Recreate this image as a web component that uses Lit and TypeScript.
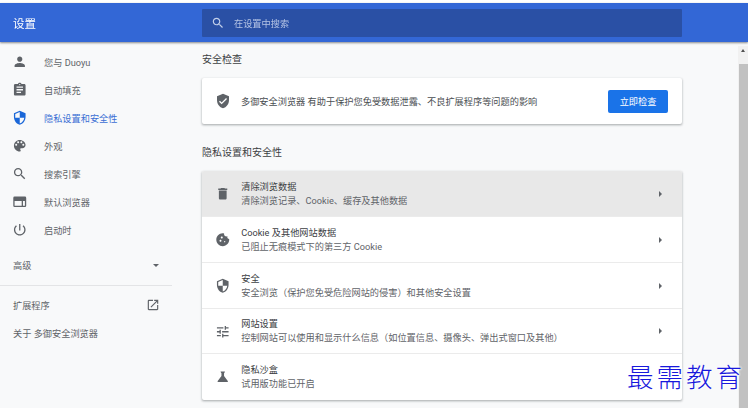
import { LitElement, html, css } from "lit";
import { customElement } from "lit/decorators.js";

const P: Record<string, string> = {
  person: "M12 12c2.21 0 4-1.79 4-4s-1.79-4-4-4-4 1.79-4 4 1.79 4 4 4zm0 2c-2.67 0-8 1.34-8 4v2h16v-2c0-2.66-5.33-4-8-4z",
  assignment: "M19 3h-4.18C14.4 1.84 13.3 1 12 1c-1.3 0-2.4.84-2.82 2H5c-1.1 0-2 .9-2 2v14c0 1.1.9 2 2 2h14c1.1 0 2-.9 2-2V5c0-1.1-.9-2-2-2zm-7 0c.55 0 1 .45 1 1s-.45 1-1 1-1-.45-1-1 .45-1 1-1zm2 14H7v-2h7v2zm3-4H7v-2h10v2zm0-4H7V7h10v2z",
  security: "M12 1L3 5v6c0 5.55 3.84 10.74 9 12 5.16-1.26 9-6.45 9-12V5l-9-4zm0 10.99h7c-.53 4.12-3.28 7.79-7 8.94V12H5V6.3l7-3.11v8.8z",
  palette: "M12 3c-4.97 0-9 4.03-9 9s4.03 9 9 9c.83 0 1.5-.67 1.5-1.5 0-.39-.15-.74-.39-1.01-.23-.26-.38-.61-.38-.99 0-.83.67-1.5 1.5-1.5H16c2.76 0 5-2.24 5-5 0-4.42-4.03-8-9-8zm-5.5 9c-.83 0-1.5-.67-1.5-1.5S5.67 9 6.5 9 8 9.67 8 10.5 7.33 12 6.5 12zm3-4C8.67 8 8 7.33 8 6.5S8.67 5 9.5 5s1.5.67 1.5 1.5S10.33 8 9.5 8zm5 0c-.83 0-1.5-.67-1.5-1.5S13.67 5 14.5 5s1.5.67 1.5 1.5S15.33 8 14.5 8zm3 4c-.83 0-1.5-.67-1.5-1.5S16.67 9 17.5 9s1.5.67 1.5 1.5-.67 1.5-1.5 1.5z",
  search: "M15.5 14h-.79l-.28-.27C15.41 12.59 16 11.11 16 9.5 16 5.91 13.09 3 9.5 3S3 5.91 3 9.5 5.91 16 9.5 16c1.61 0 3.09-.59 4.23-1.57l.27.28v.79l5 4.99L20.49 19l-4.99-5zm-6 0C7.01 14 5 11.99 5 9.5S7.01 5 9.5 5 14 7.01 14 9.5 11.99 14 9.5 14z",
  web: "M20 4H4a2 2 0 0 0-2 2v12a2 2 0 0 0 2 2h16a2 2 0 0 0 2-2V6a2 2 0 0 0-2-2zM4 18v-7h11v7H4zm16 0h-3v-7h3v7z",
  power: "M13 3h-2v10h2V3zm4.83 2.17l-1.42 1.42C17.99 7.86 19 9.81 19 12c0 3.87-3.13 7-7 7s-7-3.13-7-7c0-2.19 1.01-4.14 2.58-5.42L6.17 5.17C4.23 6.82 3 9.26 3 12c0 4.97 4.03 9 9 9s9-4.03 9-9c0-2.74-1.23-5.18-3.17-6.83z",
  open: "M19 19H5V5h7V3H5c-1.11 0-2 .9-2 2v14c0 1.1.89 2 2 2h14c1.1 0 2-.9 2-2v-7h-2v7zM14 3v2h3.59l-9.83 9.83 1.41 1.41L19 6.41V10h2V3h-7z",
  check: "M12 1L3 5v6c0 5.55 3.84 10.74 9 12 5.16-1.26 9-6.45 9-12V5l-9-4zm-2 16l-4-4 1.41-1.41L10 14.17l6.59-6.59L18 9l-8 8z",
  trash: "M6 19c0 1.1.9 2 2 2h8c1.1 0 2-.9 2-2V7H6v12zM19 4h-3.5l-1-1h-5l-1 1H5v2h14V4z",
  cookie: "M21.95 10.99c-1.79-.03-3.7-1.95-2.68-4.22-2.97 1-5.78-1.59-5.19-4.56C7.11.74 2 6.41 2 12c0 5.52 4.48 10 10 10 5.89 0 10.54-5.08 9.95-11.01zM8.5 15c-.83 0-1.5-.67-1.5-1.5S7.67 12 8.5 12s1.5.67 1.5 1.5S9.33 15 8.5 15zm2-5C9.67 10 9 9.33 9 8.5S9.67 7 10.5 7s1.5.67 1.5 1.5-.67 1.5-1.5 1.5zm4.5 6c-.55 0-1-.45-1-1s.45-1 1-1 1 .45 1 1-.45 1-1 1z",
  tune: "M3 17v2h6v-2H3zM3 5v2h10V5H3zm10 16v-2h8v-2h-8v-2h-2v6h2zM7 9v2H3v2h4v2h2V9H7zm14 4v-2H11v2h10zm-6-4h2V7h4V5h-4V3h-2v6z",
  flask: "M19.8 18.4L14 10.67V6.5l1.35-1.69c.26-.33.03-.81-.39-.81H9.04c-.42 0-.65.48-.39.81L10 6.5v4.17L4.2 18.4c-.49.66-.02 1.6.8 1.6h14c.82 0 1.29-.94.8-1.6z",
};
const icon = (n: string) => html`<svg class="ic" viewBox="0 0 24 24"><path d=${P[n]} fill="currentColor"></path></svg>`;

const NAV = [
  ["person", "您与 Duoyu"],
  ["assignment", "自动填充"],
  ["security", "隐私设置和安全性"],
  ["palette", "外观"],
  ["search", "搜索引擎"],
  ["web", "默认浏览器"],
  ["power", "启动时"],
];
const ROWS = [
  ["trash", "清除浏览数据", "清除浏览记录、Cookie、缓存及其他数据"],
  ["cookie", "Cookie 及其他网站数据", "已阻止无痕模式下的第三方 Cookie"],
  ["security", "安全", "安全浏览（保护您免受危险网站的侵害）和其他安全设置"],
  ["tune", "网站设置", "控制网站可以使用和显示什么信息（如位置信息、摄像头、弹出式窗口及其他）"],
  ["flask", "隐私沙盒", "试用版功能已开启"],
];

@customElement("app-root")
export class AppRoot extends LitElement {
  static styles = css`
    :host { display: block; width: 748px; height: 408px; overflow: hidden; position: relative; background: #fff;
      font-family: Roboto, "Noto Sans CJK SC", sans-serif; font-size: 9.2px; color: #5f6368; }
    .app { display: flex; flex-direction: column; height: 408px; padding-top: 3px; box-sizing: border-box; filter: blur(.3px); }
    header { height: 39px; flex: none; background: #3367d6; display: flex; align-items: center; box-shadow: 0 1px 2px rgba(60,64,67,.6); position: relative; z-index: 2; }
    .brand { width: 202px; padding-left: 13px; box-sizing: border-box; color: #fff; font-size: 11.5px; flex: none; }
    .search { width: 480px; height: 28px; background: #2a50a5; border-radius: 1px; display: flex; align-items: center; color: #b4c3e4; }
    .search .ic { width: 14px; height: 14px; margin: 0 9px 0 9px; color: #c3d0ea; }
    .body { flex: 1; display: flex; min-height: 0; background: #f8f9fa; }
    nav { width: 172px; flex: none; padding-top: 6px; margin-right: 30px; }
    .item { height: 28px; display: flex; align-items: center; }
    .item .ic { width: 15.5px; height: 15.5px; margin: 0 16.25px 0 12.25px; color: #5f6368; flex: none; }
    .item.on { color: #3b6fd4; }
    .item.on .ic { color: #1a67d8; }
    .adv { height: 28px; margin-top: 7px; display: flex; align-items: center; justify-content: space-between; padding: 0 13px; }
    .tri { width: 0; height: 0; border-left: 3.5px solid transparent; border-right: 3.5px solid transparent; border-top: 3.5px solid #5f6368; }
    .sep { height: 1px; background: #e3e4e6; margin-top: 6px; }
    .link { height: 28px; display: flex; align-items: center; justify-content: space-between; padding: 0 12px 0 13px; }
    .link .ic { width: 14px; height: 14px; }
    .l1 { margin-top: 5px; }
    main { width: 480px; flex: none; }
    h2 { margin: 0; font-weight: 400; font-size: 10px; color: #3c4043; height: 12px; line-height: 12px; }
    .h1 { margin-top: 12px; }
    .h2 { margin-top: 23px; }
    .card { background: #fff; border-radius: 2px; box-shadow: 0 1px 2px rgba(60,64,67,.3), 0 1px 2px 1px rgba(60,64,67,.1); }
    .safety { margin-top: 12px; height: 46px; display: flex; align-items: center; color: #4a4e52; }
    .safety .ic { width: 16px; height: 16px; margin: 0 10px 0 13px; color: #5f6368; }
    .safety span { flex: 1; }
    button { width: 60px; height: 23px; margin-right: 14px; border: 0; border-radius: 2px; background: #1a73e8; color: #fff; font: inherit; padding: 0; }
    .list { margin-top: 12px; }
    .row { height: 45.75px; box-sizing: border-box; display: flex; align-items: center; box-shadow: 0 -1px 0 #ebebeb; }
    .row:first-child { height: 46px; box-shadow: none; background: #e8e8e8; border-radius: 2px 2px 0 0; }
    .row .ic { width: 15.5px; height: 15.5px; margin: 0 10.5px 0 13.25px; color: #5f6368; flex: none; }
    .txt { flex: 1; display: flex; flex-direction: column; gap: 2px; line-height: 12px; }
    .t { color: #3c4043; }
    .arrow { width: 0; height: 0; border-top: 3px solid transparent; border-bottom: 3px solid transparent; border-left: 3.5px solid #5f6368; margin-right: 20px; }
    .bar { position: absolute; right: 0; top: 46px; bottom: 0; width: 10px; background: #f1f1f1; }
    .bar i { position: absolute; left: 1px; right: 0; top: 18px; bottom: 0; background: #c1c1c1; }
    .bar b { position: absolute; left: 3px; top: 3px; width: 0; height: 0; border-left: 2px solid transparent; border-right: 2px solid transparent; border-bottom: 3px solid #505050; }
    .mark { position: absolute; left: 627px; top: 359px; color: #1818dc; font-size: 26.5px; font-weight: 300; line-height: 34px; letter-spacing: 3px; z-index: 3;
      font-family: "Noto Sans CJK SC", sans-serif; white-space: nowrap;
      text-shadow: 0 0 3px #fff, 0 0 3px #fff, 0 0 3px #fff, 0 0 3px #fff; }
  `;

  render() {
    return html`<div class="app">
      <header>
        <div class="brand">设置</div>
        <div class="search">${icon("search")}<span>在设置中搜索</span></div>
      </header>
      <div class="body">
        <nav>
          ${NAV.map(([i, t], k) => html`<div class="item ${k === 2 ? "on" : ""}">${icon(i)}<span>${t}</span></div>`)}
          <div class="adv"><span>高级</span><div class="tri"></div></div>
          <div class="sep"></div>
          <div class="link l1"><span>扩展程序</span>${icon("open")}</div>
          <div class="link"><span>关于 多御安全浏览器</span></div>
        </nav>
        <main>
          <h2 class="h1">安全检查</h2>
          <div class="card safety">${icon("check")}<span>多御安全浏览器 有助于保护您免受数据泄露、不良扩展程序等问题的影响</span><button>立即检查</button></div>
          <h2 class="h2">隐私设置和安全性</h2>
          <div class="card list">
            ${ROWS.map(([i, t, s]) => html`<div class="row">${icon(i)}<div class="txt"><div class="t">${t}</div><div>${s}</div></div>${i === "flask" ? "" : html`<div class="arrow"></div>`}</div>`)}
          </div>
        </main>
      </div>
      <div class="bar"><b></b><i></i></div>
      <div class="mark">最需教育</div>
    </div>`;
  }
}
